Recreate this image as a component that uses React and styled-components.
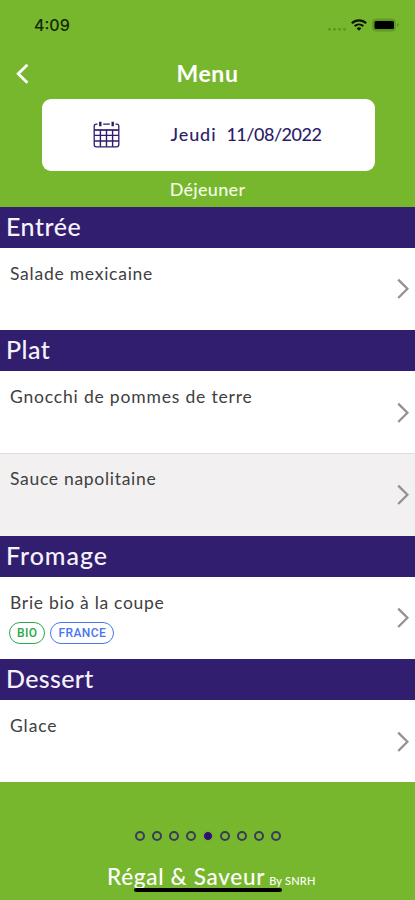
import React from 'react';
import styled, { createGlobalStyle } from 'styled-components';

const sections = [
	{ title: 'Entrée', spacing: 0.5, items: [{ name: 'Salade mexicaine', spacing: 0.75 }] },
	{
		title: 'Plat',
		spacing: 0.5,
		items: [
			{ name: 'Gnocchi de pommes de terre', spacing: 0.82 },
			{ name: 'Sauce napolitaine', spacing: 0.7 },
		],
	},
	{
		title: 'Fromage',
		spacing: 0.95,
		items: [
			{
				name: 'Brie bio à la coupe',
				spacing: 0.7,
				tags: [
					{ label: 'BIO', color: '#2ba84a' },
					{ label: 'FRANCE', color: '#4a74ee' },
				],
			},
		],
	},
	{ title: 'Dessert', spacing: 0.35, items: [{ name: 'Glace', spacing: 0.9 }] },
];

const PAGE_COUNT = 9;
const CURRENT_PAGE = 4;

function StatusBar() {
	return (
		<StatusRow>
			<Time>4:09</Time>
			<StatusIcons width="74" height="16" viewBox="0 0 74 16">
				<g fill="#5b9a20">
					<circle cx="2.5" cy="12.3" r="1.5" />
					<circle cx="7.5" cy="12.3" r="1.5" />
					<circle cx="12.5" cy="12.3" r="1.5" />
					<circle cx="17.5" cy="12.3" r="1.5" />
				</g>
				<g fill="none" stroke="#0b1604" strokeWidth="2.1">
					<path d="M24.8 6.2a10.5 10.5 0 0 1 14.4 0" />
					<path d="M27.7 9.1a6.4 6.4 0 0 1 8.6 0" />
				</g>
				<path d="M32 13.8l-2.4-2.6a3.6 3.6 0 0 1 4.8 0z" fill="#0b1604" />
				<rect x="45.5" y="2" width="23" height="12" rx="3.5" fill="#5d9c20" stroke="#5d9c20" />
				<rect x="47.5" y="4" width="19.5" height="8" rx="1.5" fill="#000" />
				<path d="M70.3 6v4a2.2 2.2 0 0 0 0-4z" fill="#4d8a14" />
			</StatusIcons>
		</StatusRow>
	);
}

function CalendarIcon() {
	return (
		<svg width="28" height="28" viewBox="0 0 28 28" fill="none" stroke="#2f1d6b">
			<path d="M4.5 3.2H3.2Q1.2 3.2 1.2 5.2V23.6Q1.2 25.8 3.2 25.8H23.6Q25.8 25.8 25.8 23.6V5.2Q25.8 3.2 23.8 3.2H22.4M10.2 3.2h6.6" strokeWidth="1.3" />
			<path d="M7.3 0.8v4.4M19.7 0.8v4.4" strokeWidth="2.4" />
			<path d="M1.2 9h24.6" strokeWidth="1.7" />
			<path d="M1.2 14.4h24.6M1.2 20h24.6M7.4 9v16.8M13.5 9v16.8M19.6 9v16.8" strokeWidth="1.4" />
		</svg>
	);
}

function MenuItem({ name, spacing, tags, shaded }) {
	return (
		<Item $shaded={shaded}>
			<div>
				<ItemName $spacing={spacing}>{name}</ItemName>
				{tags && (
					<Tags>
						{tags.map((tag) => (
							<Tag key={tag.label} $color={tag.color}>
								{tag.label}
							</Tag>
						))}
					</Tags>
				)}
			</div>
			<svg width="13" height="22" viewBox="0 0 13 22" fill="none" stroke="#929292" strokeWidth="2.3">
				<path d="M1.2 1.6L10.4 10.8L1.2 20" />
			</svg>
		</Item>
	);
}

function App() {
	return (
		<Screen>
			<GlobalStyle />
			<StatusBar />
			<TitleBar>
				<BackButton aria-label="Retour">
					<svg width="14" height="22" viewBox="0 0 14 22" fill="none" stroke="#fff" strokeWidth="2.8">
						<path d="M12.4 1.8L3.2 10.8L12.4 19.8" />
					</svg>
				</BackButton>
				<Title>Menu</Title>
			</TitleBar>
			<DateCard>
				<CalendarIcon />
				<DateText>
					<Day>Jeudi</Day>
					<FullDate>11/08/2022</FullDate>
				</DateText>
			</DateCard>
			<Meal>Déjeuner</Meal>
			{sections.map((section) => (
				<section key={section.title}>
					<SectionTitle $spacing={section.spacing}>{section.title}</SectionTitle>
					{section.items.map((item, index) => (
						<MenuItem key={item.name} {...item} shaded={index % 2 === 1} />
					))}
				</section>
			))}
			<Dots>
				{Array.from({ length: PAGE_COUNT }, (_, index) => (
					<Dot key={index} $active={index === CURRENT_PAGE} />
				))}
			</Dots>
			<Footer>
				<Brand>Régal &amp; Saveur</Brand>
				<Company>By SNRH</Company>
				<HomeBar />
			</Footer>
		</Screen>
	);
}
export default App;

const GlobalStyle = createGlobalStyle`
	* {
		box-sizing: border-box;
	}
	body {
		margin: 0;
		overflow: hidden;
		background-color: #77b72d;
	}
`;
const Screen = styled.main`
	display: flex;
	flex-direction: column;
	width: 415px;
	height: 900px;
	overflow: hidden;
	background-color: #77b72d;
	font-family: Lato, 'Liberation Sans', sans-serif;
`;
const StatusRow = styled.div`
	display: flex;
	justify-content: space-between;
	align-items: flex-start;
	height: 50px;
	padding: 15px 14px 0 34px;
`;
const Time = styled.span`
	font-family: Inter, sans-serif;
	font-size: 16px;
	font-weight: 500;
	line-height: 20px;
	color: #142806;
`;
const StatusIcons = styled.svg`
	margin-top: 2px;
`;
const TitleBar = styled.header`
	display: grid;
	grid-template-columns: 45px 1fr 45px;
	align-items: center;
	height: 48.8px;
`;
const BackButton = styled.button`
	display: flex;
	padding: 0 0 0 15px;
	border: none;
	background: none;
`;
const Title = styled.h1`
	margin: -2px 0 0;
	font-size: 23px;
	font-weight: 700;
	letter-spacing: 0.6px;
	text-align: center;
	color: white;
`;
const DateCard = styled.div`
	display: flex;
	align-items: center;
	flex-shrink: 0;
	width: 333px;
	height: 72px;
	margin-left: 41.5px;
	padding-left: 51px;
	border-radius: 9px;
	background-color: white;
`;
const DateText = styled.div`
	display: flex;
	gap: 10px;
	margin: -2px 0 0 50px;
	font-size: 18px;
	font-weight: 500;
	color: #2f1d6b;
`;
const Day = styled.span`
	letter-spacing: 0.9px;
`;
const FullDate = styled.span`
	letter-spacing: -0.5px;
`;
const Meal = styled.div`
	height: 35.8px;
	line-height: 36px;
	font-size: 18px;
	font-weight: 500;
	letter-spacing: 0.3px;
	text-align: center;
	color: #f4fbe9;
`;
const SectionTitle = styled.h2`
	height: 41.2px;
	margin: 0;
	padding-left: 6px;
	line-height: 39px;
	font-size: 25px;
	font-weight: 500;
	letter-spacing: ${({ $spacing }) => $spacing}px;
	color: #f5f2fb;
	background-color: #311e6e;
`;
const Item = styled.div`
	display: flex;
	justify-content: space-between;
	align-items: center;
	height: 82.2px;
	padding: 0 5px 0 9px;
	border-top: 1px solid ${({ $shaded }) => ($shaded ? '#dfdddd' : 'white')};
	background-color: ${({ $shaded }) => ($shaded ? '#f2f0f1' : 'white')};

	> div {
		align-self: flex-start;
		padding-top: 13px;
	}
`;
const ItemName = styled.div`
	padding-left: 1px;
	line-height: 23px;
	font-size: 17.5px;
	letter-spacing: ${({ $spacing }) => $spacing}px;
	color: #404040;
`;
const Tags = styled.div`
	display: flex;
	gap: 5px;
	margin-top: 8px;
`;
const Tag = styled.span`
	height: 22px;
	padding: 0 7px;
	border: 1px solid ${({ $color }) => $color};
	border-radius: 11px;
	line-height: 20px;
	font-family: Roboto, sans-serif;
	font-size: 12px;
	font-weight: 500;
	letter-spacing: 0.4px;
	color: ${({ $color }) => $color};
`;
const Dots = styled.div`
	display: flex;
	justify-content: center;
	align-items: center;
	gap: 7px;
	margin-top: 48.2px;
	height: 11px;
`;
const Dot = styled.span`
	width: 10px;
	height: 10px;
	border: ${({ $active }) => ($active ? '1px solid #77b72d' : '2px solid #393c58')};
	border-radius: 50%;
	background-color: ${({ $active }) => ($active ? '#300f75' : 'transparent')};
`;
const Footer = styled.footer`
	position: relative;
	display: flex;
	align-items: baseline;
	gap: 4px;
	margin-top: 21px;
	padding-left: 107px;
	color: white;
`;
const Brand = styled.span`
	font-size: 22.5px;
	font-weight: 500;
	line-height: 30px;
	letter-spacing: 0.7px;
`;
const Company = styled.span`
	font-size: 11px;
	font-weight: 500;
	letter-spacing: 0.2px;
`;
const HomeBar = styled.div`
	position: absolute;
	left: 134px;
	top: 26px;
	width: 148px;
	height: 4px;
	border-radius: 2px;
	background-color: black;
`;
